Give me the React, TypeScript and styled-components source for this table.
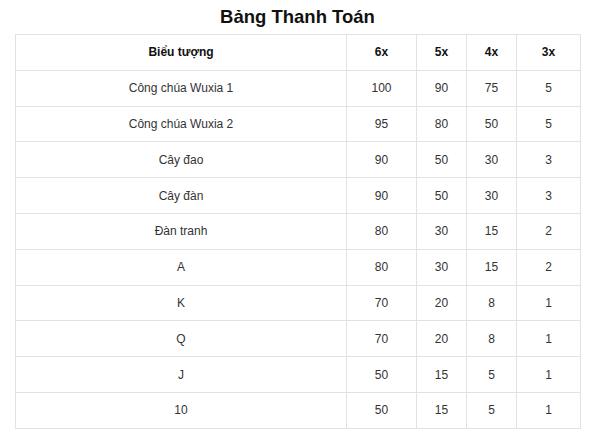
import React from "react";
import styled, { createGlobalStyle } from "styled-components";

const Global = createGlobalStyle`
  html, body { margin: 0; padding: 0; background: #fff; }
  body { font-family: "Liberation Sans", Arial, sans-serif; color: #222; }
`;

const Page = styled.div`
  width: 600px;
  padding: 5px 0 0 15px;
  box-sizing: border-box;
`;

const Title = styled.h2`
  margin: 0;
  width: 565px;
  height: 29px;
  line-height: 24px;
  text-align: center;
  font-size: 18.5px;
  font-weight: bold;
  color: #111;
`;

const Table = styled.table`
  width: 565px;
  border-collapse: collapse;
  table-layout: fixed;
  font-size: 12px;
`;

const Col = styled.col<{ $w: number }>`
  width: ${(p) => p.$w}px;
`;

const Cell = styled.td<{ $head?: boolean }>`
  border: 1px solid #e2e2e2;
  height: 34.8px;
  padding: 0;
  text-align: center;
  vertical-align: middle;
  font-weight: ${(p) => (p.$head ? "bold" : "normal")};
  color: ${(p) => (p.$head ? "#111" : "#333")};
`;

const widths = [331, 70, 50, 50, 64];
const heads = ["Biểu tượng", "6x", "5x", "4x", "3x"];

const rows: [string, number, number, number, number][] = [
  ["Công chúa Wuxia 1", 100, 90, 75, 5],
  ["Công chúa Wuxia 2", 95, 80, 50, 5],
  ["Cây đao", 90, 50, 30, 3],
  ["Cây đàn", 90, 50, 30, 3],
  ["Đàn tranh", 80, 30, 15, 2],
  ["A", 80, 30, 15, 2],
  ["K", 70, 20, 8, 1],
  ["Q", 70, 20, 8, 1],
  ["J", 50, 15, 5, 1],
  ["10", 50, 15, 5, 1],
];

export default function App() {
  return (
    <>
      <Global />
      <Page>
        <Title>Bảng Thanh Toán</Title>
        <Table>
          <colgroup>
            {widths.map((w, i) => (
              <Col key={i} $w={w} />
            ))}
          </colgroup>
          <thead>
            <tr>
              {heads.map((h) => (
                <Cell as="th" key={h} $head>
                  {h}
                </Cell>
              ))}
            </tr>
          </thead>
          <tbody>
            {rows.map((r) => (
              <tr key={r[0]}>
                {r.map((v, i) => (
                  <Cell key={i}>{v}</Cell>
                ))}
              </tr>
            ))}
          </tbody>
        </Table>
      </Page>
    </>
  );
}
